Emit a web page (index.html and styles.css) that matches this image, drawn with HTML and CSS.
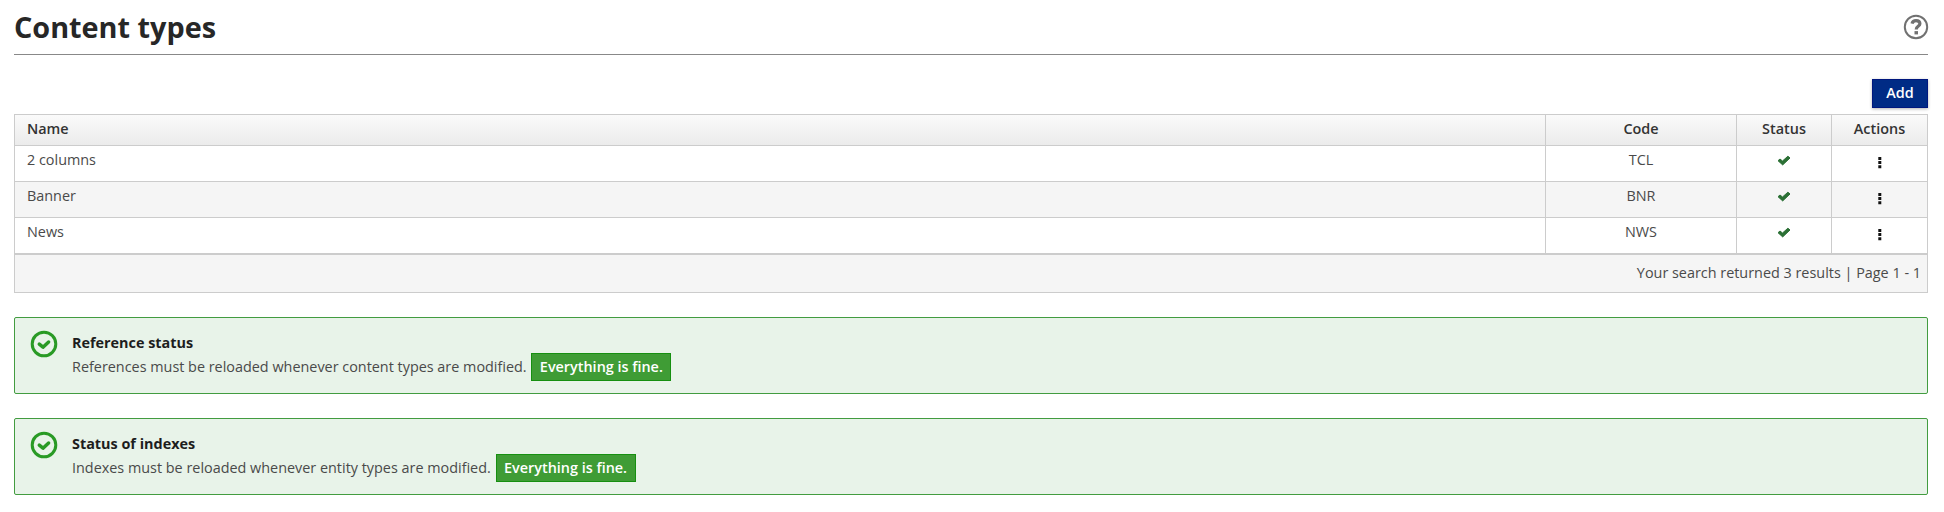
FILE: index.html
```html
<!DOCTYPE html>
<html lang="en">
<head>
<meta charset="utf-8">
<title>Content types</title>
<link rel="stylesheet" href="styles.css">
</head>
<body>
<svg class="sprite" aria-hidden="true">
  <symbol id="check" viewBox="0 0 14 12"><path d="M1 5.7 L3 4 L5.5 6 L10.9 1.2 L13 3 L5.7 9.9 Z" fill="currentColor" stroke="currentColor" stroke-width="1" stroke-linejoin="round"/></symbol>
  <symbol id="dots" viewBox="0 0 4 13"><path d="M.3 1h3v3h-3zM.3 5.1h3v3h-3zM.3 9.2h3v3h-3z" fill="currentColor"/></symbol>
  <symbol id="circle-check" viewBox="0 0 28 28"><circle cx="14" cy="14" r="11.8" fill="none" stroke="currentColor" stroke-width="3"/><path d="M9.3 14.2 L13 17.2 L18.6 12" fill="none" stroke="currentColor" stroke-width="3.5" stroke-linecap="round" stroke-linejoin="round"/></symbol>
</svg>
<header class="page-header">
  <h1 class="title">Content types</h1>
  <svg class="help" viewBox="0 0 26 26"><circle cx="13" cy="13" r="11.2" fill="none" stroke="currentColor" stroke-width="2"/><path d="M9 9.6 C9.6 7.5 11.1 6.7 13 6.7 C15.4 6.7 16.9 8 16.9 9.8 C16.9 12.4 13.2 12.3 13.2 15.4" fill="none" stroke="currentColor" stroke-width="3.2"/><path d="M11.5 17.1h3.5v3.3h-3.5z" fill="currentColor"/></svg>
</header>
<div class="toolbar"><button class="add">Add</button></div>
<main>
  <div class="table">
    <div class="row head"><div>Name</div><div>Code</div><div>Status</div><div>Actions</div></div>
    <div class="row"><div>2 columns</div><div>TCL</div><div><svg class="check"><use href="#check"/></svg></div><div><svg class="dots"><use href="#dots"/></svg></div></div>
    <div class="row alt"><div>Banner</div><div>BNR</div><div><svg class="check"><use href="#check"/></svg></div><div><svg class="dots"><use href="#dots"/></svg></div></div>
    <div class="row"><div>News</div><div>NWS</div><div><svg class="check"><use href="#check"/></svg></div><div><svg class="dots"><use href="#dots"/></svg></div></div>
    <div class="summary">Your search returned 3 results | Page 1 - 1</div>
  </div>
  <section class="notice">
    <svg class="notice-icon"><use href="#circle-check"/></svg>
    <div><h2 class="notice-title">Reference status</h2>
    <p class="notice-text">References must be reloaded whenever content types are modified. <span class="badge">Everything is fine.</span></p></div>
  </section>
  <section class="notice">
    <svg class="notice-icon"><use href="#circle-check"/></svg>
    <div><h2 class="notice-title">Status of indexes</h2>
    <p class="notice-text">Indexes must be reloaded whenever entity types are modified. <span class="badge">Everything is fine.</span></p></div>
  </section>
</main>
</body>
</html>
```
FILE: styles.css
```css
* { box-sizing: border-box; }
body {
  margin: 0;
  padding: 0 16px 0 14px;
  background: #fff;
  color: #4a4a4a;
  font: 14.4px/20px "Open Sans", "Noto Sans", sans-serif;
}
.sprite { display: none; }
.page-header {
  display: flex;
  justify-content: space-between;
  height: 55px;
  padding-top: 7px;
  border-bottom: 1px solid #888;
}
.title { margin: 0; color: #272727; font-size: 28.8px; line-height: 39px; font-weight: 700; }
.help { width: 26px; height: 26px; margin-top: 7px; margin-right: -1px; color: #717171; }
.toolbar { display: flex; justify-content: flex-end; height: 59px; padding-top: 24px; }
.add {
  width: 56px;
  height: 29px;
  padding: 0 0 1px;
  border: 1px solid #00177e;
  background: #002b85;
  box-shadow: 0 1px 3px rgba(0, 0, 0, .3);
  color: #fff;
  font: 600 14.4px/26px "Open Sans", sans-serif;
}
.table { border: 1px solid #ccc; }
.row { display: grid; grid-template-columns: 1fr 191px 95px 96px; height: 36px; border-bottom: 1px solid #ccc; }
.row > div { padding: 4px 12px 0; text-align: center; border-left: 1px solid #ccc; }
.row > div:first-child { text-align: left; border-left: 0; }
.alt { background: #f5f5f5; }
.head { height: 31px; background: linear-gradient(#fafafa, #ebebeb); color: #333; font-weight: 600; }
.check { display: block; width: 14px; height: 12px; margin: 5px auto 0; color: #2b7035; }
.dots { display: block; width: 4px; height: 13px; margin: 6px auto 0; color: #111; }
.summary { height: 38px; padding: 8px 6px 0; border-top: 1px solid #ccc; background: #f5f5f5; text-align: right; }
.notice {
  display: flex;
  gap: 14px;
  height: 77px;
  margin-top: 24px;
  padding: 12px 15px;
  border: 1px solid #429c40;
  border-radius: 2px;
  background: #e8f3e9;
}
.notice-icon { width: 28px; height: 28px; color: #299a25; }
.notice-title { margin: 3px 0 4px; color: #1d1d1d; font-size: 14.4px; line-height: 20px; font-weight: 700; }
.notice-text { margin: 0; line-height: 20px; }
.badge {
  display: inline-block;
  width: 140px;
  height: 28px;
  margin: -4px 0 -4px 1px;
  padding: 3px 0;
  border: 1px solid #168f10;
  background: #3f9c35;
  color: #fff;
  font-weight: 600;
  text-align: center;
}
```
